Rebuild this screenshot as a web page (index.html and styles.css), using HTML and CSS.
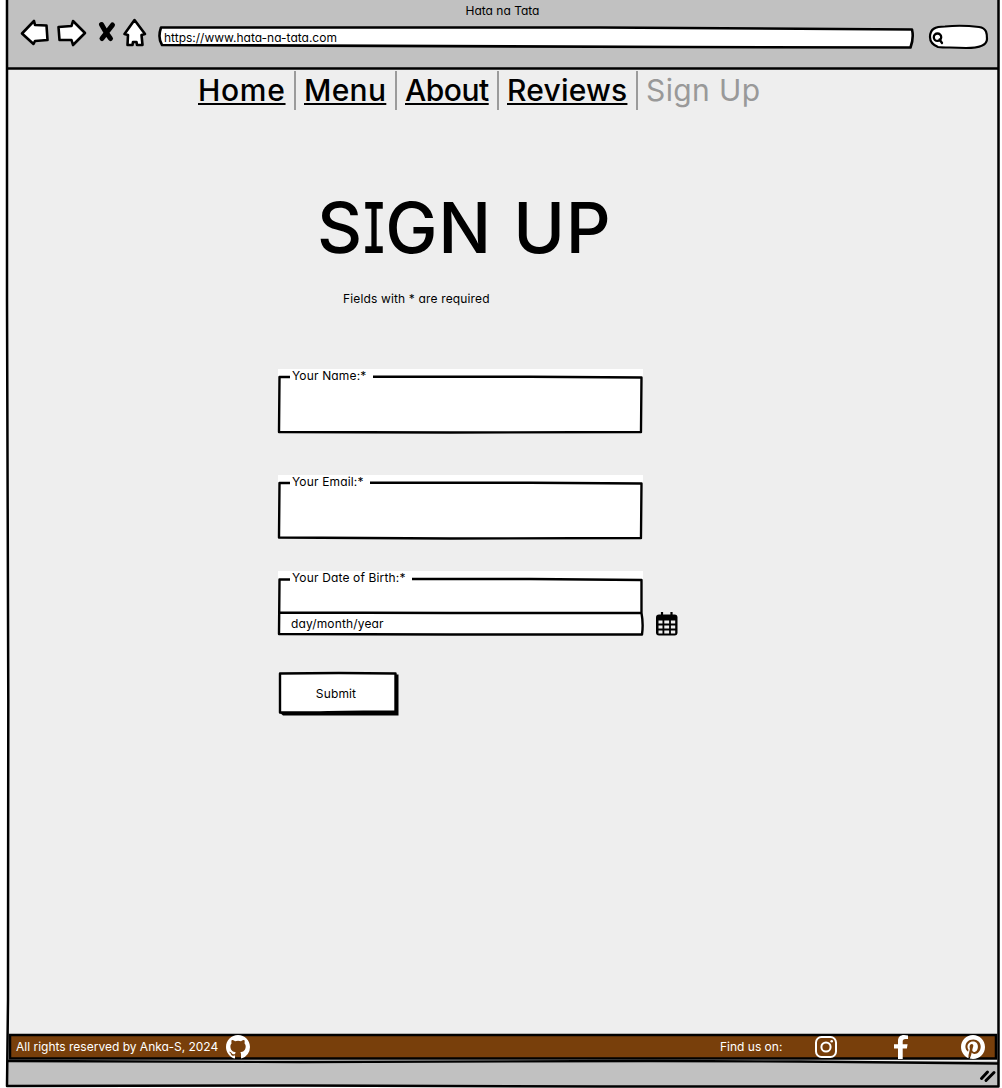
FILE: index.html
```html
<!DOCTYPE html>
<html lang="en">
<head>
<meta charset="utf-8">
<title>Hata na Tata</title>
<link rel="stylesheet" href="styles.css">
</head>
<body>
<div class="window">
  <svg class="frame" viewBox="0 0 1002 1088" aria-hidden="true">
    <path d="M7 0L7 300L8.300 700L8 1000L7 1086L300 1085.500L600 1086.500L998.500 1086.500L998.500 0M8 68.500L998 68.500"/>
  </svg>
  <header class="chrome">
    <div class="title">Hata na Tata</div>
    <div class="toolbar">
      <svg class="tools" viewBox="20 16 130 34">
        <path class="shape" d="M22 33.500L34 21L35 25L46.500 25.500L47.500 40L35 41L33.500 44Z"/>
        <path class="shape" d="M58.500 27L71.500 26L73 21L85 33L73 45L71.500 40L59.500 40Z"/>
        <path class="cross" d="M101.500 24.500Q106 33 110.500 38.500M112.500 25Q107 32 102 38.500"/>
        <path class="shape" d="M134.500 20L145 34L141.500 35L142.500 45L137 45L136.500 42L133 42L132.500 45L127.500 45L128 35L124.500 34Z"/>
      </svg>
      <div class="address">
        <svg class="outline" viewBox="156 22 760 30"><path class="shape" d="M161 27.500Q400 27.500 600 27.500Q750 28.500 912 29.500Q914 38 910.500 47.500L680 47Q400 45.500 162 45Q157.500 38 161 27.500Z"/></svg>
        <span class="url">https://www.hata-na-tata.com</span>
      </div>
      <svg class="search" viewBox="926 22 64 30"><path class="shape thin" d="M930 37C930 29 935 26.500 945 26.500C959 25 971 26 979 27C987 28 987 34 987 39C987 46 979 48 966 48C953 47 945 48 938 47C933 45 930 41 930 37Z"/><circle class="glass" cx="937.500" cy="37.200" r="3.700"/><path class="glass" d="M939.500 39.500L942 43"/></svg>
    </div>
  </header>
  <nav class="nav">
    <a class="home">Home</a><a class="menu">Menu</a><a class="about">About</a><a class="reviews">Reviews</a><a class="current">Sign Up</a>
  </nav>
  <main class="page">
    <h1>S<span class="narrow">I</span>GN UP</h1>
    <p class="note">Fields with * are required</p>
    <form>
      <div class="field name">
        <svg class="outline" viewBox="276 368 370 68"><path class="fill" d="M278 369H643V432H278Z"/><path class="line" d="M290 377H279.500L279 432L450 432.500L641 432L641.500 377.500L530 376.700L373 376.700"/></svg>
        <label>Your Name:*</label>
      </div>
      <div class="field email">
        <svg class="outline" viewBox="276 368 370 68"><path class="fill" d="M278 369H643V432H278Z"/><path class="line" d="M290 377H279.500L279 431.500L450 432.500L641 432L641.500 377.500L530 376.700L370 376.700"/></svg>
        <label>Your Email:*</label>
      </div>
      <div class="birth">
        <div class="field date">
          <svg class="outline" viewBox="276 570 370 68"><path class="fill" d="M278 571H643V634H278Z"/><path class="line" d="M290 579.500H279.500L279 634L450 634.500L642 634.500Q643.500 624 641.500 613V580L530 579L412 579M279 612.500L450 613L642 613"/></svg>
          <label>Your Date of Birth:*</label>
          <span class="value">day/month/year</span>
        </div>
        <svg class="calendar" viewBox="655 611 24 26"><path d="M662 612V616M671.500 612V616" stroke="#000" stroke-width="2.200"/><rect x="656" y="614.500" width="21.500" height="21" rx="3"/><path fill="#eee" d="M658.500 620.500h4v3h-4zm5.800 0h4.800v3h-4.800zm6.600 0h4.300v3h-4.300zM658.500 625.500h4v3h-4zm5.800 0h4.800v3h-4.800zm6.600 0h4.300v3h-4.300zM658.500 630.500h4v3h-4zm5.800 0h4.800v3h-4.800zm6.600 0h4.300v3h-4.300z"/></svg>
      </div>
      <button type="button">
        <svg class="outline" viewBox="277 670 124 48"><path d="M280 674L398.500 674.500V715.500H283L279 712Z"/><path class="line box" d="M280 673.500Q340 672.500 395.500 673.500V711.500Q350 711.500 320 712.500L280 712.500Z"/></svg>
        <span>Submit</span>
      </button>
    </form>
  </main>
  <footer>
    <svg class="edge" viewBox="8 1032 991 32" aria-hidden="true"><path class="brown" d="M10 1035H996V1058.500H10Z"/><path class="line" d="M8 1061L300 1062L650 1061L800 1061.500L998 1063.500"/></svg>
    <span class="rights">All rights reserved by Anka-S, 2024</span>
    <svg class="github" viewBox="0 0 16 16"><path d="M8 0C3.580 0 0 3.580 0 8c0 3.540 2.290 6.530 5.470 7.590.4.070.55-.17.55-.38v-1.490c-2.010.37-2.530-.49-2.690-.94-.09-.23-.48-.94-.82-1.130-.28-.15-.68-.52-.01-.53.63-.01 1.080.58 1.230.82.72 1.210 1.870.87 2.330.66.07-.52.28-.87.51-1.070-1.780-.2-3.640-.89-3.640-3.950 0-.87.31-1.590.82-2.150-.08-.2-.36-1.020.08-2.120 0 0 .67-.21 2.200.82a7.420 7.420 0 0 1 4 0c1.530-1.040 2.200-.82 2.200-.82.44 1.100.16 1.920.08 2.120.51.56.82 1.270.82 2.150 0 3.070-1.870 3.750-3.650 3.950.29.25.54.73.54 1.480v2.190c0 .21.15.46.55.38A8 8 0 0 0 16 8c0-4.420-3.580-8-8-8z"/></svg>
    <span class="find">Find us on:</span>
    <svg class="instagram" viewBox="0 0 22 22"><rect x="1" y="1" width="20" height="20" rx="5.500"/><circle cx="11" cy="11" r="4.600"/><circle class="dot" cx="16.700" cy="5.200" r="1.300"/></svg>
    <svg class="facebook" viewBox="0 0 14 24"><path d="M4 24V13.500H0V9.300H4V6C4 2 6.300 0 10 0Q12 0 14 .4V4H11.500C9.500 4 8.700 5 8.700 6.500V9.300H13.600L12.900 13.500H8.700V24Z"/></svg>
    <svg class="pinterest" viewBox="0 0 24 24"><path d="M12 0C5.400 0 0 5.400 0 12c0 5.100 3.200 9.400 7.600 11.200-.1-.9-.2-2.400 0-3.400l1.400-6s-.4-.7-.4-1.800c0-1.700 1-2.900 2.200-2.900 1 0 1.500.8 1.500 1.700 0 1-.7 2.600-1 4-.3 1.200.6 2.200 1.800 2.200 2.100 0 3.800-2.200 3.800-5.500 0-2.900-2.100-4.900-5-4.900-3.400 0-5.400 2.600-5.400 5.200 0 1 .4 2.100.9 2.700.1.100.1.200.1.300l-.3 1.400c-.1.200-.2.300-.4.200-1.500-.7-2.400-2.900-2.400-4.600 0-3.800 2.800-7.300 7.900-7.300 4.200 0 7.400 3 7.400 6.900 0 4.100-2.600 7.500-6.200 7.500-1.200 0-2.400-.6-2.800-1.400l-.7 2.900c-.3 1-1 2.300-1.500 3.100 1.100.3 2.300.5 3.500.5 6.600 0 12-5.400 12-12S18.600 0 12 0z"/></svg>
  </footer>
  <div class="status"><svg class="grip" viewBox="978 1069 18 14"><path d="M980.500 1078.500L986.500 1072M985 1080.500L993 1072.500"/></svg></div>
</div>
</body>
</html>
```
FILE: styles.css
```css
* { box-sizing: border-box; }
body { margin: 0; background: #fff; color: #000; overflow: hidden; font: 12px/16px Inter, "Noto Sans", sans-serif; font-feature-settings: "cv11", "cv08"; }
svg { display: block; flex: none; overflow: visible; }
.window { position: relative; width: 1002px; height: 1088px; padding: 0 3px 1px 8px; display: flex; flex-direction: column; }
.frame { position: absolute; inset: 0; width: 1002px; height: 1088px; z-index: 2; pointer-events: none; fill: none; stroke: #000; stroke-width: 2.500; stroke-linejoin: round; }
.chrome { height: 69px; background: #c1c1c1; padding-top: 3px; }
.title { text-align: center; padding-right: 2px; }
.toolbar { display: flex; padding-left: 12px; margin-top: -3px; }
.shape { fill: #fff; stroke: #000; stroke-width: 2.600; stroke-linejoin: round; }
.shape.thin { stroke-width: 2.200; }
.cross { fill: none; stroke: #000; stroke-width: 5; stroke-linecap: round; }
.tools { width: 130px; height: 34px; }
.address { position: relative; width: 760px; height: 30px; margin: 6px 0 0 6px; padding: 8px 0 0 8px; }
.outline { position: absolute; inset: 0; width: 100%; height: 100%; z-index: 0; }
.url, label, .value, button span { position: relative; }
.search { width: 64px; height: 30px; margin: 6px 0 0 10px; }
.glass { fill: none; stroke: #000; stroke-width: 2.300; stroke-linecap: round; }
.nav { display: flex; height: 101px; background: #eee; padding: 2px 0 0 181px; font-size: 30px; line-height: 38px; font-weight: 500; }
.nav a { height: 39px; padding: 0 9px 0 8px; border-right: 2px solid #9b9b9b; white-space: nowrap; text-decoration: underline; text-decoration-thickness: 2px; text-underline-offset: 2px; text-decoration-skip-ink: none; }
.nav .home { width: 107px; padding-left: 9px; letter-spacing: .7px; }
.nav .menu { width: 101px; letter-spacing: .3px; }
.nav .about { width: 102px; letter-spacing: -.5px; }
.nav .reviews { width: 139px; letter-spacing: .2px; }
.nav .current { width: 130px; color: #999; border: 0; text-decoration: none; font-weight: 400; letter-spacing: .4px; }
.page { flex: 1; background: #eee; }
h1 { margin: 16px 0 0 309px; font-size: 70px; line-height: 84px; font-weight: 500; letter-spacing: .7px; word-spacing: 2px; }
.narrow { display: inline-block; margin: 0 -5px; transform: scaleX(.68); }
.note { margin: 21px 0 0 335px; letter-spacing: .15px; }
form { padding: 61px 0 0 268px; }
label, .value, button span { letter-spacing: .15px; }
.field { position: relative; width: 370px; height: 68px; padding-left: 16px; }
.email { margin-top: 38px; }
.birth { display: flex; margin-top: 28px; }
.calendar { width: 24px; height: 26px; margin: 41px 0 0 9px; }
.value { display: block; margin-top: 30px; margin-left: -1px; }
.fill { fill: #fff; }
.line { fill: none; stroke: #000; stroke-width: 2.400; stroke-linejoin: round; }
.line.box { fill: #fff; }
button { position: relative; display: block; width: 124px; height: 48px; margin: 32px 0 0 1px; padding: 0 6px 0 0; border: 0; background: none; font: inherit; font-feature-settings: inherit; color: #000; }
footer { position: relative; display: flex; align-items: center; height: 29px; padding-left: 8px; margin-top: 0; background: #eee; color: #fff; fill: #fff; }
.edge { position: absolute; left: 0; top: 0; width: 991px; height: 32px; z-index: 0; }
.brown { fill: #783f0b; stroke: #000; stroke-width: 2.500; }
footer > :not(.edge) { position: relative; }
.rights { width: 202px; white-space: nowrap; }
.github { width: 24px; height: 24px; margin-left: 8px; }
.find { width: 64px; margin-left: 470px; white-space: nowrap; }
.instagram { width: 22px; height: 22px; margin-left: 31px; fill: none; stroke: #fff; stroke-width: 2; }
.dot { fill: #fff; stroke: none; }
.facebook { width: 14px; height: 24px; margin-left: 57px; }
.pinterest { width: 24px; height: 24px; margin-left: 53px; }
.status { height: 26px; background: #c1c1c1; padding: 8px 2px 0; display: flex; justify-content: flex-end; }
.grip { width: 18px; height: 14px; fill: none; stroke: #000; stroke-width: 3; stroke-linecap: round; }
```
